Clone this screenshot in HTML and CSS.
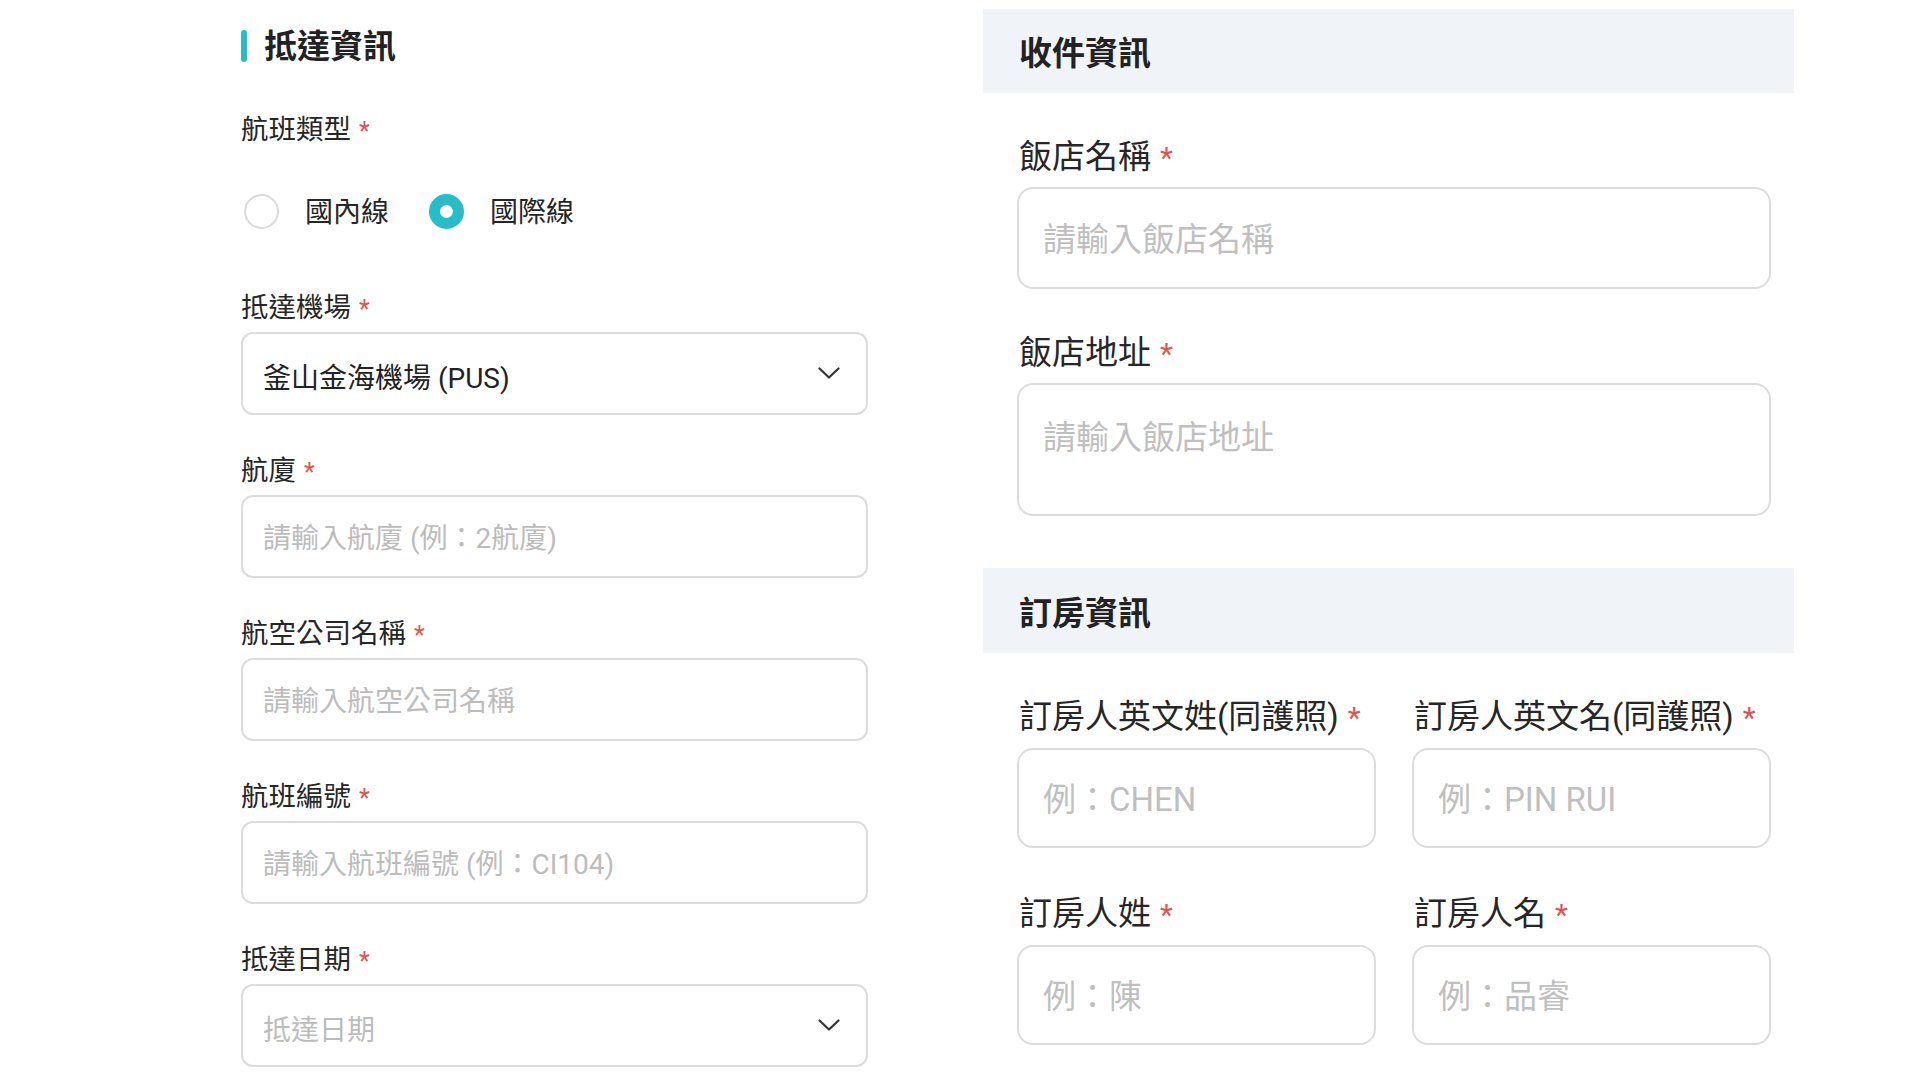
FILE: index.html
```html
<!DOCTYPE html>
<html lang="zh-Hant">
<head>
<meta charset="utf-8">
<title>表單</title>
<link rel="stylesheet" href="styles.css">
</head>
<body>
<div class="page">
  <section class="arrival">
    <h2 class="arrival-title">抵達資訊</h2>

    <div class="field field-radio">
      <div class="label">航班類型<span class="req">*</span></div>
      <div class="radio-row">
        <label class="radio"><span class="radio-dot"></span><span class="radio-text">國內線</span></label>
        <label class="radio"><span class="radio-dot checked"></span><span class="radio-text">國際線</span></label>
      </div>
    </div>

    <div class="field">
      <div class="label">抵達機場<span class="req">*</span></div>
      <div class="box select">
        <span class="value">釜山金海機場 (PUS)</span>
        <svg class="chev" width="22" height="12" viewBox="0 0 22 12"><path d="M1.5 1.5 L11 10.5 L20.5 1.5" fill="none" stroke="#333" stroke-width="2.2" stroke-linecap="round" stroke-linejoin="round"/></svg>
      </div>
    </div>

    <div class="field">
      <div class="label">航廈<span class="req">*</span></div>
      <input class="box input" type="text" placeholder="請輸入航廈 (例：2航廈)">
    </div>

    <div class="field">
      <div class="label">航空公司名稱<span class="req">*</span></div>
      <input class="box input" type="text" placeholder="請輸入航空公司名稱">
    </div>

    <div class="field">
      <div class="label">航班編號<span class="req">*</span></div>
      <input class="box input" type="text" placeholder="請輸入航班編號 (例：CI104)">
    </div>

    <div class="field">
      <div class="label">抵達日期<span class="req">*</span></div>
      <div class="box select">
        <span class="value placeholder">抵達日期</span>
        <svg class="chev" width="22" height="12" viewBox="0 0 22 12"><path d="M1.5 1.5 L11 10.5 L20.5 1.5" fill="none" stroke="#333" stroke-width="2.2" stroke-linecap="round" stroke-linejoin="round"/></svg>
      </div>
    </div>
  </section>

  <section class="receive">
    <div class="band">收件資訊</div>
    <div class="r-body">
      <div class="r-field">
        <div class="r-label">飯店名稱<span class="req">*</span></div>
        <input class="r-box" type="text" placeholder="請輸入飯店名稱">
      </div>
      <div class="r-field">
        <div class="r-label">飯店地址<span class="req">*</span></div>
        <textarea class="r-box r-area" placeholder="請輸入飯店地址"></textarea>
      </div>
    </div>

    <div class="band band-2">訂房資訊</div>
    <div class="r-body r-grid">
      <div class="r-field">
        <div class="r-label">訂房人英文姓(同護照)<span class="req">*</span></div>
        <input class="r-box r-small" type="text" placeholder="例：CHEN">
      </div>
      <div class="r-field">
        <div class="r-label">訂房人英文名(同護照)<span class="req">*</span></div>
        <input class="r-box r-small" type="text" placeholder="例：PIN RUI">
      </div>
      <div class="r-field">
        <div class="r-label">訂房人姓<span class="req">*</span></div>
        <input class="r-box r-small" type="text" placeholder="例：陳">
      </div>
      <div class="r-field">
        <div class="r-label">訂房人名<span class="req">*</span></div>
        <input class="r-box r-small" type="text" placeholder="例：品睿">
      </div>
    </div>
  </section>
</div>
</body>
</html>
```

FILE: styles.css
```css
* { box-sizing: border-box; }
html, body {
  margin: 0;
  padding: 0;
  background: #ffffff;
  width: 1920px;
  height: 1080px;
  overflow: hidden;
}
body {
  font-family: Roboto, "Noto Sans CJK TC", "Noto Sans", sans-serif;
  color: #262626;
}
.page {
  display: flex;
  align-items: flex-start;
  padding-left: 241px;
  gap: 115px;
}

/* ---------- left column ---------- */
.arrival {
  width: 627px;
  padding-top: 25px;
}
.arrival-title {
  margin: 0 0 43px 0;
  padding-top: 2px;
  display: flex;
  align-items: center;
  gap: 17px;
  font-size: 33px;
  line-height: 40px;
  font-weight: 700;
  color: #222;
}
.arrival-title::before {
  content: "";
  width: 6px;
  height: 32px;
  border-radius: 3px;
  background: #26bdc8;
  position: relative;
  top: -1px;
}
.label {
  font-size: 27.5px;
  line-height: 34px;
  padding-top: 3px;
  color: #262626;
  display: flex;
  align-items: center;
}
.req {
  color: #e0544c;
  font-size: 25px;
  line-height: 1;
  margin-left: 8px;
  position: relative;
  top: 1px;
}
.field { margin-bottom: 36px; }
.field .label { margin-bottom: 7px; }
.field-radio { margin-bottom: 59px; }
.field-radio .label { margin-bottom: 46px; }
.radio-row {
  display: flex;
  align-items: center;
  gap: 40px;
  padding-left: 3px;
  height: 36px;
}
.radio {
  display: flex;
  align-items: center;
  gap: 26px;
}
.radio-dot {
  width: 35px;
  height: 35px;
  border-radius: 50%;
  border: 2px solid #dadada;
  background: #fff;
}
.radio-dot.checked {
  border: 11px solid #26bdc8;
}
.radio-text {
  font-size: 28px;
  line-height: 36px;
  padding-top: 3px;
  color: #262626;
}
.box {
  display: block;
  width: 100%;
  height: 83px;
  border: 2px solid #dcdcdc;
  border-radius: 12px;
  background: #fff;
  padding: 4px 26px 0 20px;
  font-family: Roboto, "Noto Sans CJK TC", "Noto Sans", sans-serif;
  font-size: 28px;
  color: #222;
  outline: none;
}
.input::placeholder { color: #bcbcbc; }
.select {
  display: flex;
  align-items: center;
  justify-content: space-between;
  padding-top: 0;
}
.value { line-height: 40px; padding-top: 10px; }
.value.placeholder { color: #bcbcbc; }
.chev { display: block; margin-top: -2px; }

/* ---------- right column ---------- */
.receive {
  width: 811px;
  margin-top: 9px;
}
.band {
  height: 84px;
  background: #f0f4f9;
  display: flex;
  align-items: center;
  padding-left: 36px;
  padding-top: 0;
  font-size: 33px;
  font-weight: 700;
  color: #222;
}
.band-2 { height: 85px; }
.r-body {
  padding: 42px 23px 0 34px;
}
.r-field { margin-bottom: 42px; }
.r-body .r-field:last-child { margin-bottom: 52px; }
.r-label {
  font-size: 33px;
  line-height: 40px;
  padding-top: 2px;
  color: #262626;
  display: flex;
  align-items: center;
  margin-bottom: 10px;
  padding-left: 2px;
  white-space: nowrap;
}
.r-label .req { font-size: 30px; margin-left: 9px; top: 1px; }
.r-box {
  display: block;
  width: 100%;
  height: 102px;
  border: 2px solid #dcdcdc;
  border-radius: 16px;
  background: #fff;
  padding: 2px 24px 0 24px;
  font-family: Roboto, "Noto Sans CJK TC", "Noto Sans", sans-serif;
  font-size: 33px;
  color: #222;
  outline: none;
}
.r-box::placeholder { color: #bfbfbf; }
.r-area {
  height: 133px;
  resize: none;
  padding-top: 30px;
  line-height: 46px;
}
.r-grid {
  display: grid;
  grid-template-columns: 359px 359px;
  column-gap: 36px;
  row-gap: 0;
}
.r-grid .r-field { margin-bottom: 44px; }
.r-grid .r-label { margin-bottom: 11px; }
.r-small { height: 100px; }
```
